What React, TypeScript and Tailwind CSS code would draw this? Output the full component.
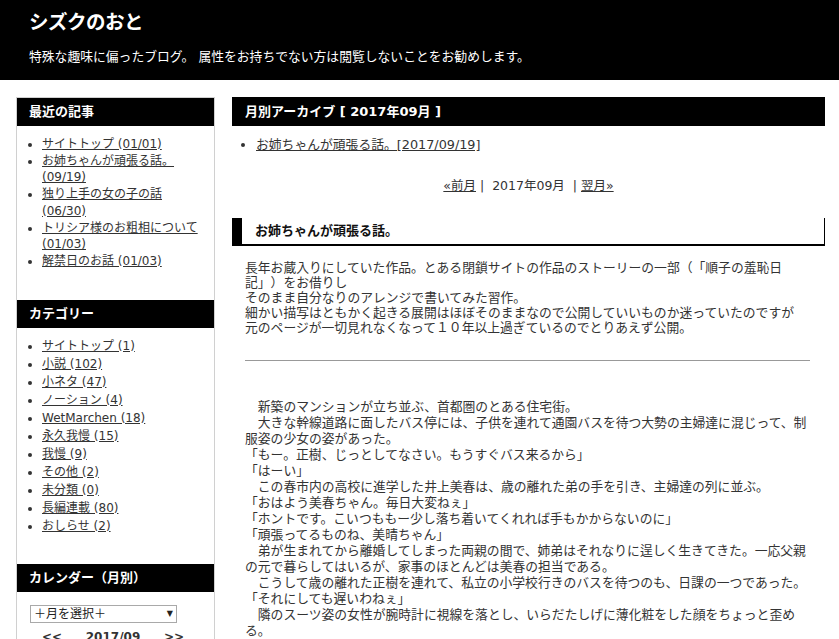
const recent = [
  'サイトトップ (01/01)',
  'お姉ちゃんが頑張る話。 (09/19)',
  '独り上手の女の子の話 (06/30)',
  'トリシア様のお粗相について (01/03)',
  '解禁日のお話 (01/03)',
]

const categories = [
  'サイトトップ (1)',
  '小説 (102)',
  '小ネタ (47)',
  'ノーション (4)',
  'WetMarchen (18)',
  '永久我慢 (15)',
  '我慢 (9)',
  'その他 (2)',
  '未分類 (0)',
  '長編連載 (80)',
  'おしらせ (2)',
]

const story = [
  '　新築のマンションが立ち並ぶ、首都圏のとある住宅街。',
  '　大きな幹線道路に面したバス停には、子供を連れて通園バスを待つ大勢の主婦達に混じって、制服姿の少女の姿があった。',
  '「もー。正樹、じっとしてなさい。もうすぐバス来るから」',
  '「はーい」',
  '　この春市内の高校に進学した井上美春は、歳の離れた弟の手を引き、主婦達の列に並ぶ。',
  '「おはよう美春ちゃん。毎日大変ねぇ」',
  '「ホントです。こいつももー少し落ち着いてくれれば手もかからないのに」',
  '「頑張ってるものね、美晴ちゃん」',
  '　弟が生まれてから離婚してしまった両親の間で、姉弟はそれなりに逞しく生きてきた。一応父親の元で暮らしてはいるが、家事のほとんどは美春の担当である。',
  '　こうして歳の離れた正樹を連れて、私立の小学校行きのバスを待つのも、日課の一つであった。',
  '「それにしても遅いわねぇ」',
  '　隣のスーツ姿の女性が腕時計に視線を落とし、いらだたしげに薄化粧をした顔をちょっと歪める。',
]

function SideHeading({ children }: { children: React.ReactNode }) {
  return (
    <div className="h-[28px] bg-black text-white font-bold text-[13px] leading-[28px] pl-[12px]">
      {children}
    </div>
  )
}

export default function App() {
  return (
    <div className="min-h-screen bg-white text-[#333] [text-spacing-trim:space-all] font-['DejaVu_Sans','Noto_Sans_CJK_JP',sans-serif]">
      {/* Header */}
      <header className="h-[80px] bg-black text-white px-[29px] pt-[10px]">
        <h1 className="text-[19.5px] font-bold leading-[26px] tracking-[-0.5px]">シズクのおと</h1>
        <p className="mt-[13px] text-[12.8px] leading-[16px]">
          特殊な趣味に偏ったブログ。 属性をお持ちでない方は閲覧しないことをお勧めします。
        </p>
      </header>

      <div className="flex gap-[17px] pl-[16px] pr-[14px] pt-[17px]">
        {/* Sidebar */}
        <aside className="w-[199px] shrink-0 border border-[#d0d0d0] min-h-[560px]">
          <SideHeading>最近の記事</SideHeading>
          <ul className="list-disc pl-[25px] pr-[6px] mt-[10px] mb-[30px] text-[12px] leading-[16.7px]">
            {recent.map((r) => (
              <li key={r}>
                <a href="#" className="underline text-[#333]">{r}</a>
              </li>
            ))}
          </ul>

          <SideHeading>カテゴリー</SideHeading>
          <ul className="list-disc pl-[25px] pr-[6px] mt-[9px] mb-[29px] text-[12px] leading-[18px]">
            {categories.map((c) => (
              <li key={c}>
                <a href="#" className="underline text-[#333]">{c}</a>
              </li>
            ))}
          </ul>

          <SideHeading>カレンダー（月別）</SideHeading>
          <div className="ml-[13px] mt-[13px] w-[147px] h-[18px] border border-[#a9a9a9] flex items-center justify-between px-[3px] text-[12px] leading-[16px] text-[#222]">
            <span>＋月を選択＋</span>
            <span className="text-[8px]">▼</span>
          </div>
          <div className="flex justify-between ml-[25px] mr-[30px] mt-[6px] text-[12px] leading-[16px] font-bold">
            <span>&lt;&lt;</span>
            <span>2017/09</span>
            <span>&gt;&gt;</span>
          </div>
        </aside>

        {/* Main */}
        <main className="flex-1 min-w-0 text-[12.8px]">
          <div className="h-[29px] bg-black text-white font-bold text-[13px] leading-[29px] pl-[13px]">
            月別アーカイブ [ 2017年09月 ]
          </div>
          <ul className="list-disc pl-[24px] mt-[10px] leading-[17px]">
            <li>
              <a href="#" className="underline text-[#333]">お姉ちゃんが頑張る話。[2017/09/19]</a>
            </li>
          </ul>
          <div className="mt-[24px] text-center leading-[17px] text-[12.5px]">
            <a href="#" className="underline text-[#333]">«前月</a>
            <span> | &nbsp;2017年09月 &nbsp;| </span>
            <a href="#" className="underline text-[#333]">翌月»</a>
          </div>

          <div className="mt-[24px] h-[28px] border-l-[10px] border-b-2 border-r border-black pl-[13px] flex items-center font-bold text-[13px] text-[#111]">
            お姉ちゃんが頑張る話。
          </div>

          <div className="px-[13px] mt-[14px] leading-[15px]">
            <p>
              長年お蔵入りにしていた作品。とある閉鎖サイトの作品のストーリーの一部（「順子の羞恥日記」）をお借りし
              <br />
              そのまま自分なりのアレンジで書いてみた習作。
              <br />
              細かい描写はともかく起きる展開はほぼそのままなので公開していいものか迷っていたのですが
              <br />
              元のページが一切見れなくなって１０年以上過ぎているのでとりあえず公開。
            </p>
          </div>

          <hr className="ml-[13px] mr-[15px] mt-[25px] border-0 border-t border-[#999]" />

          <div className="px-[13px] mt-[38px] leading-[16px]">
            {story.map((s, i) => (
              <p key={i}>{s}</p>
            ))}
          </div>
        </main>
      </div>
    </div>
  )
}
